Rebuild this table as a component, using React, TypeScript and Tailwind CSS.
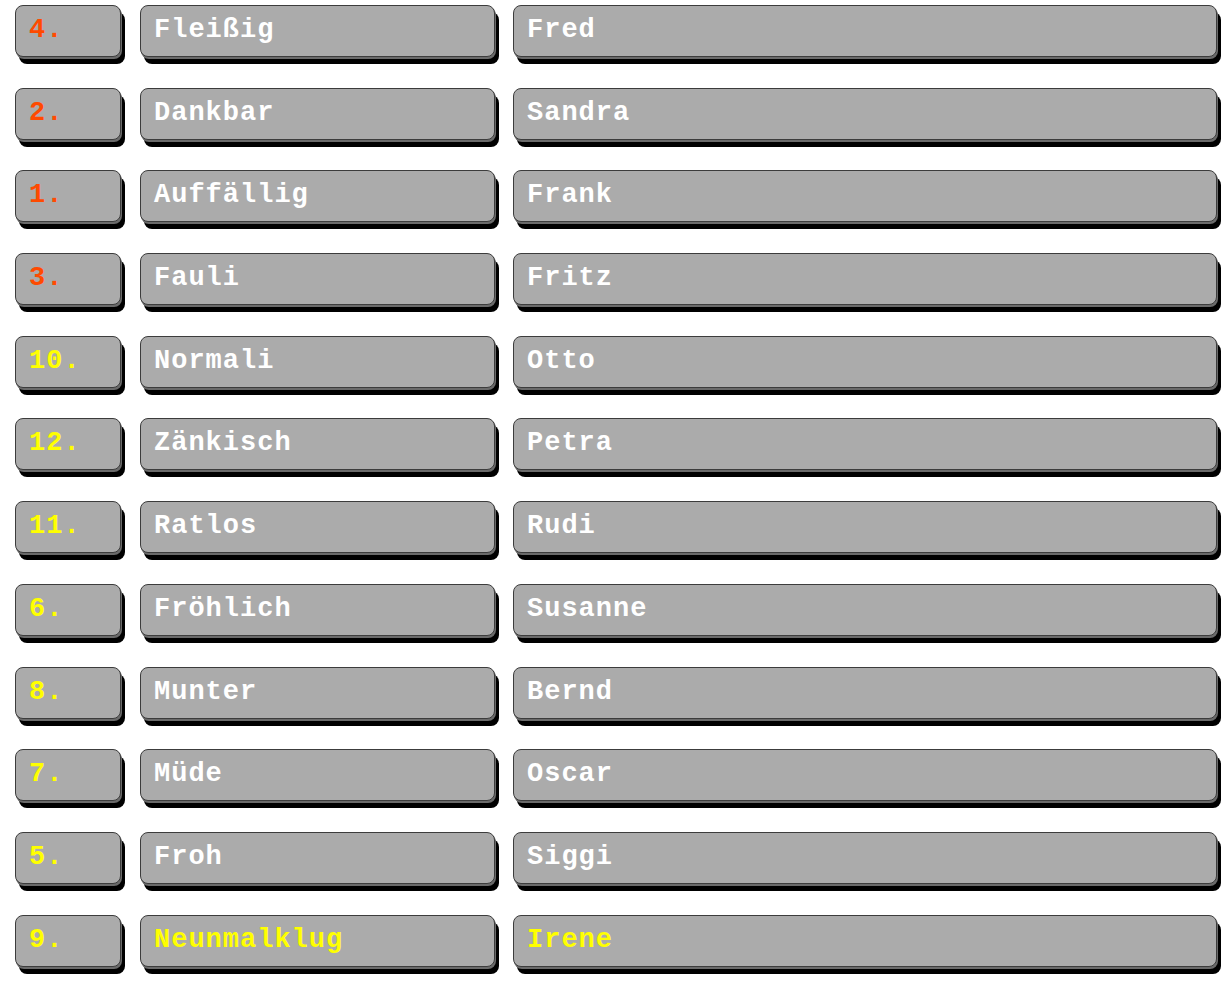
import React from 'react';

type Row = { rank: string; trait: string; name: string; hot?: boolean; star?: boolean };

const rows: Row[] = [
  { rank: '4.', trait: 'Fleißig', name: 'Fred', hot: true },
  { rank: '2.', trait: 'Dankbar', name: 'Sandra', hot: true },
  { rank: '1.', trait: 'Auffällig', name: 'Frank', hot: true },
  { rank: '3.', trait: 'Fauli', name: 'Fritz', hot: true },
  { rank: '10.', trait: 'Normali', name: 'Otto' },
  { rank: '12.', trait: 'Zänkisch', name: 'Petra' },
  { rank: '11.', trait: 'Ratlos', name: 'Rudi' },
  { rank: '6.', trait: 'Fröhlich', name: 'Susanne' },
  { rank: '8.', trait: 'Munter', name: 'Bernd' },
  { rank: '7.', trait: 'Müde', name: 'Oscar' },
  { rank: '5.', trait: 'Froh', name: 'Siggi' },
  { rank: '9.', trait: 'Neunmalklug', name: 'Irene', star: true },
];

const Tile: React.FC<{ width: string; color: string; children: React.ReactNode }> = ({ width, color, children }) => (
  <div
    className={`${width} h-[52px] shrink-0 rounded-[8px] border border-[#3c3c3c] bg-[#ababab] pl-[13px] pt-[11px] shadow-[1px_2px_0_#6a6a6a,4px_7px_0_#000] ${color}`}
  >
    <span className="block text-[27px] font-bold leading-[27px] tracking-[1px] whitespace-nowrap">{children}</span>
  </div>
);

const App: React.FC = () => {
  return (
    <div
      className="min-h-[986px] w-[1230px] bg-white pl-[15px] pt-[5px]"
      style={{ fontFamily: '"Liberation Mono", "Courier New", monospace' }}
    >
      <div className="flex flex-col gap-[30.7px]">
        {rows.map((row) => (
          <div key={row.rank} className="flex">
            <Tile width="w-[106px]" color={row.hot ? 'text-[#ff4a00]' : 'text-[#ffff00]'}>
              {row.rank}
            </Tile>
            <div className="ml-[19px]">
              <Tile width="w-[355px]" color={row.star ? 'text-[#ffff00]' : 'text-white'}>
                {row.trait}
              </Tile>
            </div>
            <div className="ml-[18px]">
              <Tile width="w-[704px]" color={row.star ? 'text-[#ffff00]' : 'text-white'}>
                {row.name}
              </Tile>
            </div>
          </div>
        ))}
      </div>
    </div>
  );
};

export default App;
